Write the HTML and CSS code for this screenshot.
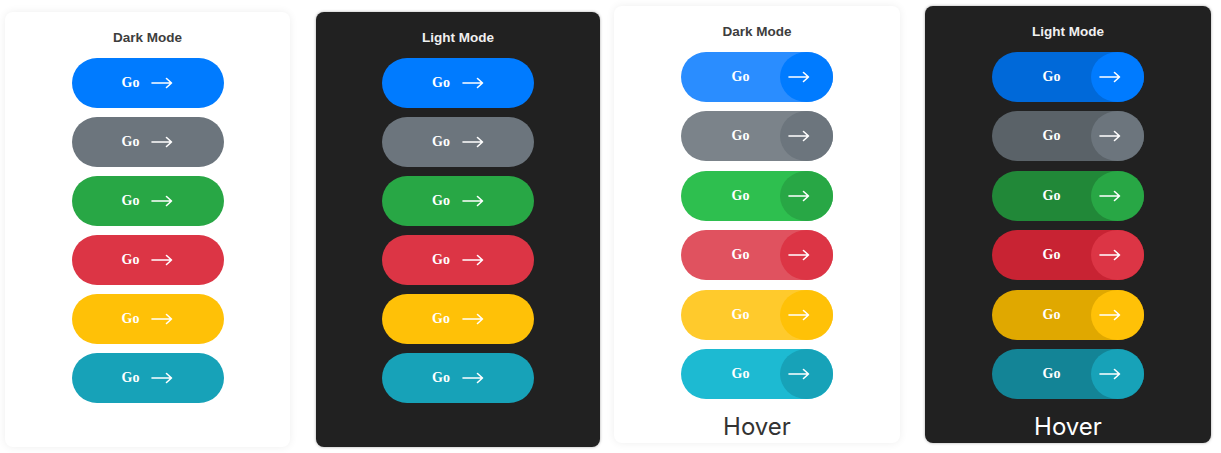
FILE: index.html
```html
<!DOCTYPE html>
<html>
<head>
<meta charset="utf-8">
<link rel="stylesheet" href="styles.css">
</head>
<body>
<div class="row">
  <div class="card card-light c1">
    <div class="title">Dark Mode</div>
    <div class="stack">
      <div class="btn blue"><span class="lbl">Go</span><svg class="arr" viewBox="0 0 22 12"><path d="M1 6H20.5M15.5 1.5L20.5 6L15.5 10.5"/></svg></div>
      <div class="btn gray"><span class="lbl">Go</span><svg class="arr" viewBox="0 0 22 12"><path d="M1 6H20.5M15.5 1.5L20.5 6L15.5 10.5"/></svg></div>
      <div class="btn green"><span class="lbl">Go</span><svg class="arr" viewBox="0 0 22 12"><path d="M1 6H20.5M15.5 1.5L20.5 6L15.5 10.5"/></svg></div>
      <div class="btn red"><span class="lbl">Go</span><svg class="arr" viewBox="0 0 22 12"><path d="M1 6H20.5M15.5 1.5L20.5 6L15.5 10.5"/></svg></div>
      <div class="btn yellow"><span class="lbl">Go</span><svg class="arr" viewBox="0 0 22 12"><path d="M1 6H20.5M15.5 1.5L20.5 6L15.5 10.5"/></svg></div>
      <div class="btn teal"><span class="lbl">Go</span><svg class="arr" viewBox="0 0 22 12"><path d="M1 6H20.5M15.5 1.5L20.5 6L15.5 10.5"/></svg></div>
    </div>
  </div>

  <div class="card card-dark c2">
    <div class="title">Light Mode</div>
    <div class="stack">
      <div class="btn blue"><span class="lbl">Go</span><svg class="arr" viewBox="0 0 22 12"><path d="M1 6H20.5M15.5 1.5L20.5 6L15.5 10.5"/></svg></div>
      <div class="btn gray"><span class="lbl">Go</span><svg class="arr" viewBox="0 0 22 12"><path d="M1 6H20.5M15.5 1.5L20.5 6L15.5 10.5"/></svg></div>
      <div class="btn green"><span class="lbl">Go</span><svg class="arr" viewBox="0 0 22 12"><path d="M1 6H20.5M15.5 1.5L20.5 6L15.5 10.5"/></svg></div>
      <div class="btn red"><span class="lbl">Go</span><svg class="arr" viewBox="0 0 22 12"><path d="M1 6H20.5M15.5 1.5L20.5 6L15.5 10.5"/></svg></div>
      <div class="btn yellow"><span class="lbl">Go</span><svg class="arr" viewBox="0 0 22 12"><path d="M1 6H20.5M15.5 1.5L20.5 6L15.5 10.5"/></svg></div>
      <div class="btn teal"><span class="lbl">Go</span><svg class="arr" viewBox="0 0 22 12"><path d="M1 6H20.5M15.5 1.5L20.5 6L15.5 10.5"/></svg></div>
    </div>
  </div>

  <div class="card card-light c3">
    <div class="title">Dark Mode</div>
    <div class="stack stack-hover">
      <div class="hbtn hl-blue"><span class="hlbl">Go</span><span class="circ"><svg class="arr" viewBox="0 0 22 12"><path d="M1 6H20.5M15.5 1.5L20.5 6L15.5 10.5"/></svg></span></div>
      <div class="hbtn hl-gray"><span class="hlbl">Go</span><span class="circ"><svg class="arr" viewBox="0 0 22 12"><path d="M1 6H20.5M15.5 1.5L20.5 6L15.5 10.5"/></svg></span></div>
      <div class="hbtn hl-green"><span class="hlbl">Go</span><span class="circ"><svg class="arr" viewBox="0 0 22 12"><path d="M1 6H20.5M15.5 1.5L20.5 6L15.5 10.5"/></svg></span></div>
      <div class="hbtn hl-red"><span class="hlbl">Go</span><span class="circ"><svg class="arr" viewBox="0 0 22 12"><path d="M1 6H20.5M15.5 1.5L20.5 6L15.5 10.5"/></svg></span></div>
      <div class="hbtn hl-yellow"><span class="hlbl">Go</span><span class="circ"><svg class="arr" viewBox="0 0 22 12"><path d="M1 6H20.5M15.5 1.5L20.5 6L15.5 10.5"/></svg></span></div>
      <div class="hbtn hl-teal"><span class="hlbl">Go</span><span class="circ"><svg class="arr" viewBox="0 0 22 12"><path d="M1 6H20.5M15.5 1.5L20.5 6L15.5 10.5"/></svg></span></div>
    </div>
    <div class="hover-label">Hover</div>
  </div>

  <div class="card card-dark c4">
    <div class="title">Light Mode</div>
    <div class="stack stack-hover">
      <div class="hbtn hd-blue"><span class="hlbl">Go</span><span class="circ"><svg class="arr" viewBox="0 0 22 12"><path d="M1 6H20.5M15.5 1.5L20.5 6L15.5 10.5"/></svg></span></div>
      <div class="hbtn hd-gray"><span class="hlbl">Go</span><span class="circ"><svg class="arr" viewBox="0 0 22 12"><path d="M1 6H20.5M15.5 1.5L20.5 6L15.5 10.5"/></svg></span></div>
      <div class="hbtn hd-green"><span class="hlbl">Go</span><span class="circ"><svg class="arr" viewBox="0 0 22 12"><path d="M1 6H20.5M15.5 1.5L20.5 6L15.5 10.5"/></svg></span></div>
      <div class="hbtn hd-red"><span class="hlbl">Go</span><span class="circ"><svg class="arr" viewBox="0 0 22 12"><path d="M1 6H20.5M15.5 1.5L20.5 6L15.5 10.5"/></svg></span></div>
      <div class="hbtn hd-yellow"><span class="hlbl">Go</span><span class="circ"><svg class="arr" viewBox="0 0 22 12"><path d="M1 6H20.5M15.5 1.5L20.5 6L15.5 10.5"/></svg></span></div>
      <div class="hbtn hd-teal"><span class="hlbl">Go</span><span class="circ"><svg class="arr" viewBox="0 0 22 12"><path d="M1 6H20.5M15.5 1.5L20.5 6L15.5 10.5"/></svg></span></div>
    </div>
    <div class="hover-label">Hover</div>
  </div>
</div>
</body>
</html>
```

FILE: styles.css
```css
* { box-sizing: border-box; }
html, body { margin: 0; padding: 0; background: #ffffff; }
body { width: 1221px; height: 453px; overflow: hidden; font-family: "Liberation Sans", Arial, sans-serif; }

.row { display: flex; align-items: flex-start; }

.card {
  border-radius: 8px;
  display: flex;
  flex-direction: column;
  align-items: center;
  padding-top: 18px;
}
.card-light { background: #ffffff; box-shadow: 0 0 8px rgba(0,0,0,0.07); }
.card-dark { background: #212121; box-shadow: 0 0 3px rgba(0,0,0,0.35); }

.c1 { width: 285px; height: 435px; margin: 12px 0 0 5px; }
.c2 { width: 284px; height: 435px; margin: 12px 0 0 26px; }
.c3 { width: 286px; height: 437px; margin: 6px 0 0 14px; }
.c4 { width: 286px; height: 437px; margin: 6px 0 0 25px; }

.title {
  font-size: 13.5px;
  font-weight: bold;
  line-height: 16px;
  height: 16px;
}
.card-light .title { color: #3d3d3d; }
.card-dark .title { color: #f0f0f0; }

.stack {
  margin-top: 12px;
  display: flex;
  flex-direction: column;
  gap: 9px;
}
.stack-hover { gap: 9.4px; }

.btn, .hbtn {
  width: 152px;
  height: 50px;
  border-radius: 25px;
  display: flex;
  align-items: center;
  color: #ffffff;
}
.btn { justify-content: center; gap: 12px; padding-left: 0; }

.lbl, .hlbl {
  font-family: "Liberation Serif", "Times New Roman", serif;
  font-weight: bold;
  font-size: 14px;
  line-height: 16px;
}

.arr {
  width: 22px;
  height: 12px;
  display: block;
  fill: none;
  stroke: #ffffff;
  stroke-width: 1.6;
  stroke-linecap: round;
  stroke-linejoin: round;
}

.blue { background: #007bff; }
.gray { background: #6c757d; }
.green { background: #28a745; }
.red { background: #dc3545; }
.yellow { background: #ffc107; }
.teal { background: #17a2b8; }

.hlbl { flex: 1; text-align: center; padding-left: 20px; }
.circ {
  width: 53px;
  height: 50px;
  border-radius: 50%;
  display: flex;
  align-items: center;
  padding-left: 8px;
}

.hl-blue { background: #2a8dff; } .hl-blue .circ { background: #007bff; }
.hl-gray { background: #7b838a; } .hl-gray .circ { background: #6c757d; }
.hl-green { background: #2ebf4f; } .hl-green .circ { background: #28a745; }
.hl-red { background: #e0525f; } .hl-red .circ { background: #dc3545; }
.hl-yellow { background: #ffca2c; } .hl-yellow .circ { background: #ffc107; }
.hl-teal { background: #1dbad2; } .hl-teal .circ { background: #17a2b8; }

.hd-blue { background: #0069d9; } .hd-blue .circ { background: #007bff; }
.hd-gray { background: #5a6268; } .hd-gray .circ { background: #6c757d; }
.hd-green { background: #218838; } .hd-green .circ { background: #28a745; }
.hd-red { background: #c82333; } .hd-red .circ { background: #dc3545; }
.hd-yellow { background: #e0a800; } .hd-yellow .circ { background: #ffc107; }
.hd-teal { background: #138496; } .hd-teal .circ { background: #17a2b8; }

.hover-label {
  margin-top: 14px;
  font-family: Inter, Roboto, "Liberation Sans", sans-serif;
  font-size: 24px;
  line-height: 28px;
}
.card-light .hover-label { color: #333333; }
.card-dark .hover-label { color: #ffffff; }
```
